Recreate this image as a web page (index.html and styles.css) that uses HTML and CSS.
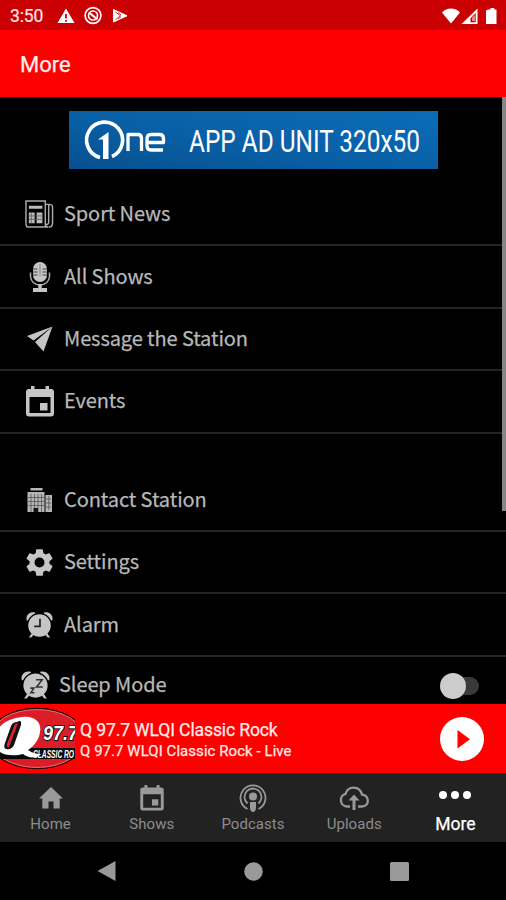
FILE: index.html
```html
<!DOCTYPE html>
<html lang="en">
<head>
<meta charset="utf-8">
<title>More</title>
<link rel="stylesheet" href="styles.css">
</head>
<body>
<svg class="defs" width="0" height="0">
  <symbol id="calendar" viewBox="0 0 28 31"><path fill="currentColor" fill-rule="evenodd" d="M5 0h3.500v3h11V0H23v3h2a3 3 0 0 1 3 3v21.500a3 3 0 0 1-3 3H3a3 3 0 0 1-3-3V6a3 3 0 0 1 3-3h2zM3.500 11v16h21V11zM14 17h7.500v7.500H14z"/></symbol>
  <symbol id="clock" viewBox="0 0 28 28"><g fill="currentColor"><circle cx="14" cy="15" r="11.700"/><path d="M.8 9.800C-.8 4.500 4 .2 9.300 1.600L9.500 2.600Q4 5 2 9.900zM27.200 9.800c1.600-5.300-3.200-9.600-8.500-8.200L18.500 2.600q5.500 2.400 7.500 7.300zM6 23l2 1.500L5.500 27.500H3zM22 23l-2 1.500 2.500 3H25z"/></g></symbol>
</svg>
<div class="screen">
  <div class="status">
    <span class="time">3:50</span>
    <svg class="status-left" width="74" height="20" viewBox="0 0 74 20">
      <path fill="#fff" fill-rule="evenodd" d="M9 2.500 17.500 17H.5zM8.100 8v4.600h1.800V8zM8.100 14v1.800h1.800V14z"/>
      <circle cx="36" cy="9.500" r="7.900" fill="none" stroke="#fff" stroke-width="1.700"/>
      <circle cx="36" cy="9.500" r="4.500" fill="none" stroke="#fff" stroke-width="1.600"/>
      <path d="m32 6.500 8.500 7" stroke="#fff" stroke-width="2.200"/>
      <path d="M56.500 3.500 70 9.800 56.500 16z" fill="#fff" stroke="#fff" stroke-linejoin="round"/>
      <path d="m58.500 6 5 3.800-5 3.800M61 6.500l3 2.300M61 13l3-2.300" fill="none" stroke="#ca0002" stroke-width=".8"/>
    </svg>
    <svg class="status-right" width="58" height="20" viewBox="0 0 58 20">
      <path d="M1 6.500C5.500 1.200 14.500 1.200 19 6.500L10 17.500z" fill="#fff"/>
      <path fill="#fff" fill-rule="evenodd" d="M36.500 2.500v15.500H20.500zM34.700 7l-5.200 5.200v4h5.200z"/>
      <path d="M32 10.500 34 9v6h-3v-3z" fill="#fff" opacity=".55"/>
      <path d="M47 3.500h2.500V2h3.800v1.500h2.200V18H45V4.500z" fill="#fff"/>
    </svg>
  </div>
  <header class="header">More</header>
  <main class="list">
    <div class="ad-row">
      <svg class="ad" width="369" height="58" viewBox="0 0 369 58">
        <defs><linearGradient id="blue" x1="0" y1="1" x2="1" y2="0"><stop offset="0" stop-color="#07508f"/><stop offset=".45" stop-color="#095fa5"/><stop offset="1" stop-color="#0b6db8"/></linearGradient></defs>
        <rect width="369" height="58" fill="url(#blue)"/>
        <path d="M31 46.500A18 18 0 1 1 43 45.500" fill="none" stroke="#fff" stroke-width="3.600"/>
        <path d="M29 28.500 39.500 21v27H34V28.500z" fill="#fff"/>
        <g fill="none" stroke="#fff" stroke-width="3.300" stroke-linejoin="round"><path d="M59 40V23.500h10q3.500 0 3.500 4V40M94 39H82q-4 0-4-4v-7q0-4.500 4-4.500h8.500q4 0 4 4V31.500H79"/></g>
        <text x="120" y="41" textLength="231" lengthAdjust="spacingAndGlyphs" class="ad-text">APP AD UNIT 320x50</text>
      </svg>
    </div>
    <section>
      <div class="row"><span class="icon"><svg width="29" height="29" viewBox="0 0 30 30"><g fill="none" stroke="#aaa" stroke-width="1.500"><path d="M1 1h20v24q0 3 3 3H4q-3 0-3-3zM21 4.500h4q3.500 0 3.500 3V24q0 4-4 4M24.500 5v18.500M21 25q3 1 3.500-1.500"/></g><path fill="#bbb" d="M4 6h14v3H4zM4 13h6v11H4zM12 13h6v11h-6z"/><path d="M4 16.500h14M4 20h14M6.500 13v11" stroke="#555" stroke-width=".8"/></svg></span>Sport News</div>
      <div class="row"><span class="icon"><svg width="22" height="32" viewBox="0 0 22 32"><rect x="4" y="1" width="14" height="20" rx="7" fill="#c5c5c5"/><path d="M4 8h4.500M4 11h4.500M4 14h4.500M13.500 8H18M13.500 11H18M13.500 14H18" stroke="#444" stroke-width="1"/><path d="M11 3v12" stroke="#888" stroke-width="1"/><path d="M1.500 11.500v4q1 8 9.500 8.500 8.500-.5 9.500-8.500v-4" fill="none" stroke="#aaa" stroke-width="1.500"/><path d="M9.300 23h3.400v4H18v4H4v-4h5.300z" fill="#c5c5c5"/></svg></span>All Shows</div>
      <div class="row"><span class="icon"><svg width="26" height="26" viewBox="0 0 26 26"><path fill="#c5c5c5" d="M0 10 25.500.5 6.500 14.500zM8 16 25.500.5 16.500 25.500z"/></svg></span>Message the Station</div>
      <div class="row"><span class="icon"><svg width="28" height="31"><use href="#calendar"/></svg></span>Events</div>
    </section>
    <section class="second">
      <div class="row"><span class="icon"><svg width="26" height="24" viewBox="0 0 26 24"><path d="M3.500 0h12v2.500h-12zM.5 4h17v20H.5zM18.500 7H25v17h-6.500z" fill="#b5b5b5"/><path d="M4 6v18M7.500 6v18M11 6v18M14.500 6v18M1 9.500h16M1 13.500h16M1 17.500h16M19 11h5M19 15h5M19 19h5M21.800 8v14" stroke="#555" stroke-width=".8"/><path d="M6.500 20h4.500v4H6.500z" fill="#111"/></svg></span>Contact Station</div>
      <div class="row"><span class="icon"><svg width="27" height="27" viewBox="2.300 2.300 19.400 19.400"><path fill="#c5c5c5" d="M19.140 12.940c.04-.3.060-.61.060-.94s-.02-.64-.07-.94l2.030-1.580a.49.49 0 0 0 .12-.61l-1.920-3.320a.49.49 0 0 0-.59-.22l-2.390.96a7 7 0 0 0-1.620-.94l-.36-2.540a.48.48 0 0 0-.48-.41h-3.840a.48.48 0 0 0-.47.41l-.36 2.540c-.59.240-1.130.57-1.620.94l-2.390-.96a.48.48 0 0 0-.59.220L2.740 8.870a.48.48 0 0 0 .12.610l2.030 1.580a7 7 0 0 0 0 1.880l-2.030 1.580a.49.49 0 0 0-.12.610l1.920 3.320c.12.220.37.290.59.220l2.390-.96c.5.380 1.030.7 1.620.94l.36 2.540c.05.240.24.410.48.410h3.840c.24 0 .44-.17.47-.41l.36-2.540a7 7 0 0 0 1.620-.94l2.390.96c.22.080.47 0 .59-.22l1.920-3.320a.48.48 0 0 0-.12-.61zM12 15.600a3.600 3.600 0 1 1 0-7.200 3.600 3.600 0 0 1 0 7.200"/></svg></span>Settings</div>
      <div class="row"><span class="icon"><svg width="27" height="27" viewBox="0 0 28 28"><use href="#clock" width="28" height="28"/><path d="M14.500 8v8H8.500" fill="none" stroke="#222" stroke-width="1.800"/></svg></span>Alarm</div>
      <div class="row sleep"><span class="icon"><svg width="29" height="29" viewBox="0 0 28 28"><use href="#clock" width="28" height="28"/><path d="M14.500 9.500h6l-5.500 7h6M9 17.500h3.500L9.500 22H13" fill="none" stroke="#333" stroke-width="1.500"/></svg></span><span>Sleep Mode</span><span class="toggle"></span></div>
    </section>
    <div class="scrollbar"></div>
  </main>
  <div class="player">
    <svg class="cover" width="75" height="69" viewBox="0 0 75 69">
      <ellipse cx="37" cy="34.500" rx="48" ry="30" fill="#dd1d26" stroke="#280408" stroke-width="1.300"/>
      <ellipse cx="37" cy="34.500" rx="47" ry="29" fill="none" stroke="#d88" stroke-width=".8"/>
      <path d="M0 44h75v11H0z" fill="#090909"/>
      <path fill="#fff" fill-rule="evenodd" d="M22 13c12-2 20 5 18 15-1 8-6 14-12 18 5 3 8 4 13 4-4 4-12 5-18 0-7 2-20 2-24-3V24C4 17 13 14 22 13z"/>
      <path d="M17 18q5-3 4 3l-7 20q-2 5-8 4-3-1-1-6l6-17q2-4 6-4z" fill="#111"/><path d="m15 20 3-1-9 24q-3 1-2-3z" fill="#e5222c"/>
      <text x="43" y="36" class="logo-number" textLength="35" lengthAdjust="spacingAndGlyphs">97.7</text>
      <text x="33" y="53.500" class="logo-sub" textLength="41" lengthAdjust="spacingAndGlyphs">CLASSIC RO</text>
    </svg>
    <div class="track"><div class="title">Q 97.7 WLQI Classic Rock</div><div class="subtitle">Q 97.7 WLQI Classic Rock - Live</div></div>
    <svg class="play" width="44" height="44" viewBox="0 0 44 44"><circle cx="22" cy="22" r="22" fill="#fff"/><path d="M17.500 13v18.500L30 22.200z" fill="#f00"/></svg>
  </div>
  <nav class="tabs">
    <div class="tab"><span class="tab-icon"><svg width="24" height="22" viewBox="0 0 24 22"><path fill="currentColor" d="M12 0 24 11.500h-3.300V21.500h-6.200v-7h-5v7H3.300v-10H0z"/></svg></span>Home</div>
    <div class="tab"><span class="tab-icon"><svg width="24" height="26"><use href="#calendar"/></svg></span>Shows</div>
    <div class="tab"><span class="tab-icon"><svg width="28" height="30" viewBox="0 0 28 30"><g fill="none" stroke="currentColor" stroke-width="1.800"><path d="M8.500 26A12.500 12.500 0 1 1 19.500 26M8.500 20.500a8.500 8.500 0 1 1 11 0"/></g><circle cx="14" cy="13.500" r="4" fill="currentColor"/><path d="M11 19h6v6q-.5 4-3 4t-3-4z" fill="currentColor"/></svg></span>Podcasts</div>
    <div class="tab"><span class="tab-icon"><svg width="30" height="24" viewBox="0 0 30 24"><path d="M11 20.500H8A6.500 6.500 0 0 1 6.500 7.800C9-.2 20.500-1 23 8.500 31 9.500 30.500 20.500 23 20.500h-4" fill="none" stroke="currentColor" stroke-width="2.300"/><path d="m15 8.500 5.500 6h-4V24h-3v-9.500h-4z" fill="currentColor"/></svg></span>Uploads</div>
    <div class="tab active"><span class="tab-icon"><svg width="32" height="10"><g fill="currentColor"><circle cx="4" cy="2" r="4"/><circle cx="16" cy="2" r="4"/><circle cx="28" cy="2" r="4"/></g></svg></span>More</div>
  </nav>
  <div class="system">
    <svg width="19" height="20" viewBox="0 0 19 20"><path fill="#999" d="M18.500 0v20L.5 10z"/></svg>
    <svg width="19" height="19"><circle cx="9.500" cy="9.500" r="9.300" fill="#999"/></svg>
    <svg width="19" height="19"><rect width="19" height="19" rx="1.500" fill="#999"/></svg>
  </div>
</div>
</body>
</html>
```
FILE: styles.css
```css
* { box-sizing: border-box; }
body { margin: 0; background: #000; font-family: Roboto, sans-serif; }
svg { display: block; flex: none; overflow: visible; }
.defs { position: absolute; }
.screen { width: 506px; height: 900px; display: flex; flex-direction: column; overflow: hidden; color: #fff; }
.status { height: 30px; flex: none; background: #ca0002; display: flex; align-items: center; padding: 1px 7px 0 10px; }
.time { font-size: 17.5px; width: 47px; color: #ffe4e4; letter-spacing: -.1px; -webkit-text-stroke: .2px; }
.status-right { margin-left: auto; }
.header { height: 67px; flex: none; background: #f00; padding: 2px 20px 0; display: flex; align-items: center; font-size: 22px; color: #ffecec; -webkit-text-stroke: .25px; }
.list { height: 607px; flex: none; position: relative; overflow: hidden; background: #000; }
.ad-row { height: 87px; padding: 14px 0 0 69px; }
.ad-text { font: 400 32px Roboto, sans-serif; fill: #fff; }
.row { height: 62.4px; border-bottom: 2px solid #242424; display: flex; align-items: center; padding: 0 0 3px 25px; font: 400 20px "Noto Sans CJK SC", sans-serif; color: #b8b8b8; letter-spacing: -.1px; -webkit-text-stroke: .25px; white-space: nowrap; }
.icon { width: 29px; margin-right: 10px; padding-top: 3px; display: flex; justify-content: center; flex: none; color: #c5c5c5; }
.second { margin-top: 36px; }
.sleep { height: 57px; padding: 0 27px 4px 21px; border: 0; }
.sleep .icon { margin-right: 9px; padding-top: 2px; }
.toggle { width: 36px; height: 18px; border-radius: 9px; background: #3a3a3a; margin: 6px 0 0 auto; position: relative; }
.toggle::before { content: ""; position: absolute; left: -3px; top: -4px; width: 26px; height: 26px; border-radius: 50%; background: #ccc; }
.scrollbar { position: absolute; right: 0; top: 0; width: 4px; height: 414px; background: #858585; }
.player { height: 69px; flex: none; background: #f00; display: flex; align-items: center; padding-right: 22px; }
.cover { overflow: hidden; }
.logo-number { font: italic 700 20px "Liberation Sans", sans-serif; fill: #fff; stroke: #111; stroke-width: 2px; paint-order: stroke; }
.logo-sub { font: italic 700 10px "Liberation Sans", sans-serif; fill: #fff; }
.track { margin: 4px 0 0 5px; white-space: nowrap; color: #ffe9e9; -webkit-text-stroke: .25px; }
.title { font-size: 17.6px; line-height: 22px; letter-spacing: -.15px; }
.subtitle { font-size: 14.9px; line-height: 21px; letter-spacing: .1px; }
.play { margin-left: auto; }
.tabs { height: 69px; flex: none; background: #222; display: grid; grid-template-columns: repeat(5, 1fr); border-top: 1px solid #333; }
.tab { display: flex; flex-direction: column; align-items: center; color: #8c8c8c; font-size: 15px; line-height: 20px; letter-spacing: .05px; padding-top: 8px; }
.tab-icon { height: 32px; display: flex; align-items: center; color: #999; }
.active, .active .tab-icon { color: #fff; }
.active { font-size: 17.5px; letter-spacing: 0; line-height: 20px; -webkit-text-stroke: .25px; }
.system { height: 58px; flex: none; display: flex; align-items: center; justify-content: space-between; padding: 0 97px; }
```
